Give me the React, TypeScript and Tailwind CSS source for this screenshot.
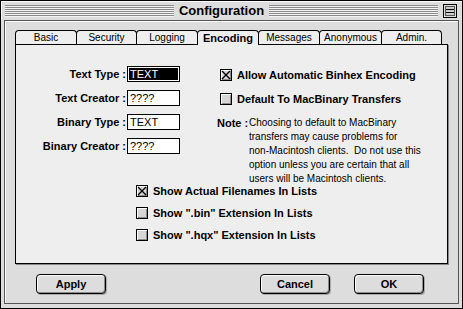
import React from 'react';

const tabs = [
  { label: 'Basic', w: 'w-[62px]' },
  { label: 'Security', w: 'w-[61px]' },
  { label: 'Logging', w: 'w-[62px]' },
  { label: 'Encoding', w: 'w-[62px]', active: true },
  { label: 'Messages', w: 'w-[62px]' },
  { label: 'Anonymous', w: 'w-[63px]' },
  { label: 'Admin.', w: 'w-[61px]' },
];

const fields = [
  { label: 'Text Type', value: 'TEXT', selected: true },
  { label: 'Text Creator', value: '????' },
  { label: 'Binary Type', value: 'TEXT' },
  { label: 'Binary Creator', value: '????' },
];

const noteLines = [
  'Choosing to default to MacBinary',
  'transfers may cause problems for',
  'non-Macintosh clients.  Do not use this',
  'option unless you are certain that all',
  'users will be Macintosh clients.',
];

function Stripes() {
  return (
    <div className="flex-1 h-[12px] bg-[repeating-linear-gradient(to_bottom,#8a8a8a_0px,#8a8a8a_1px,#f4f4f4_1px,#f4f4f4_2px)]" />
  );
}

function Checkbox({ checked }: { checked?: boolean }) {
  return (
    <div className="w-[12px] h-[12px] shrink-0 border border-black bg-[#d6d6d6] shadow-[inset_1px_1px_0_#ffffff,inset_-1px_-1px_0_#8c8c8c] relative">
      {checked && (
        <svg className="absolute inset-0" width="10" height="10" viewBox="0 0 10 10">
          <path d="M1 1 L9 9 M9 1 L1 9" stroke="#000" strokeWidth="1.4" />
        </svg>
      )}
    </div>
  );
}

function Check({ label, checked }: { label: string; checked?: boolean }) {
  return (
    <div className="flex items-center h-[12px]">
      <Checkbox checked={checked} />
      <span className="ml-[5px] text-[11px] font-bold leading-none whitespace-pre">{label}</span>
    </div>
  );
}

function Button({ label }: { label: string }) {
  return (
    <div className="w-[70px] h-[20px] rounded-[4px] border border-black bg-[#dddddd] shadow-[inset_1px_1px_0_#ffffff,inset_-1px_-1px_0_#8c8c8c,1px_1px_0_#aaaaaa] flex items-center justify-center text-[11px] font-bold">
      {label}
    </div>
  );
}

export default function App() {
  return (
    <div className="w-[463px] h-[309px] border border-black bg-[#dddddd] flex flex-col text-black font-['Liberation_Sans',Arial,sans-serif] select-none">
      {/* Title bar */}
      <div className="h-[19px] flex items-center pl-[4px] pr-[5px] shadow-[inset_1px_1px_0_#ffffff]">
        <Stripes />
        <div className="px-[5px] text-[13px] font-bold leading-none">Configuration</div>
        <Stripes />
        <svg className="ml-[5px]" width="14" height="14" viewBox="0 0 14 14">
          <rect x="0.5" y="0.5" width="13" height="13" fill="#dddddd" stroke="#000" />
          <rect x="2.5" y="2.5" width="9" height="9" fill="#cccccc" stroke="#555" />
          <path d="M3 5.5 H11 M3 8.5 H11" stroke="#000" />
        </svg>
      </div>

      {/* Body */}
      <div className="flex-1 mx-[3px] mb-[4px] border border-[#555555] shadow-[inset_1px_1px_0_#ffffff] flex flex-col pt-[9px] pl-[10px]">
        {/* Tabs */}
        <div className="flex h-[14px] items-start">
          {tabs.map((t, i) => (
            <div
              key={t.label}
              className={
                (i > 0 ? '-ml-px ' : '') +
                t.w +
                (t.active
                  ? ' h-[15px] relative z-10 font-bold text-[11px]'
                  : ' h-[14px] text-[10px]') +
                ' border border-b-0 border-black rounded-t-[4px] bg-[#eeeeee] flex items-center justify-center leading-none'
              }
            >
              {t.label}
            </div>
          ))}
        </div>

        {/* Panel */}
        <div className="w-[433px] h-[220px] border border-black bg-[#eeeeee] shadow-[1px_1px_0_#888888] flex flex-col">
          <div className="h-[140px] flex">
            {/* Fields */}
            <div className="pt-[21px] flex flex-col gap-[8px]">
              {fields.map((f) => (
                <div key={f.label} className="flex items-center h-[16px]">
                  <div className="w-[110px] text-right text-[11px] font-bold whitespace-pre">{f.label} :</div>
                  <div
                    className={
                      'ml-px w-[53px] h-[16px] border border-black px-[2px] flex items-center text-[11px] leading-none ' +
                      (f.selected ? 'bg-black text-white shadow-[inset_0_0_0_1px_#ffffff]' : 'bg-white')
                    }
                  >
                    {f.selected ? <span className="bg-black">{f.value}</span> : f.value}
                  </div>
                </div>
              ))}
            </div>

            {/* Right column */}
            <div className="ml-[37px] pt-[24px] flex flex-col">
              <div className="pl-[3px] flex flex-col gap-[12px]">
                <Check label="Allow Automatic Binhex Encoding" checked />
                <Check label="Default To MacBinary Transfers" />
              </div>
              <div className="mt-[11px] flex">
                <div className="w-[32px] text-[11px] font-bold leading-[14px] whitespace-pre">Note :</div>
                <div className="text-[10px] leading-[14px]">
                  {noteLines.map((l) => (
                    <div key={l} className="whitespace-pre">{l}</div>
                  ))}
                </div>
              </div>
            </div>
          </div>

          {/* Bottom options */}
          <div className="pl-[120px] flex flex-col gap-[10px]">
            <Check label="Show Actual Filenames In Lists" checked />
            <Check label='Show ".bin" Extension In Lists' />
            <Check label='Show ".hqx" Extension In Lists' />
          </div>
        </div>

        {/* Buttons */}
        <div className="mt-[10px] flex">
          <div className="ml-[21px]">
            <Button label="Apply" />
          </div>
          <div className="ml-auto mr-[34px] flex gap-[24px]">
            <Button label="Cancel" />
            <Button label="OK" />
          </div>
        </div>
      </div>
    </div>
  );
}
